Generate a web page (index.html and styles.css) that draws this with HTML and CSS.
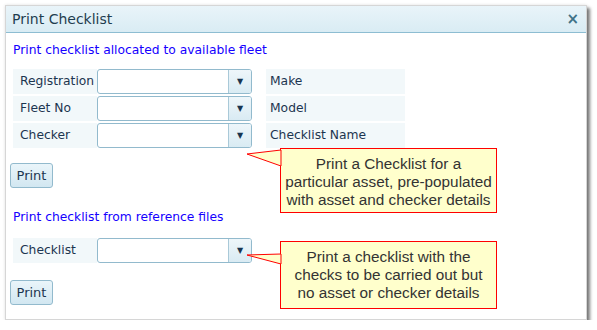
FILE: index.html
```html
<!DOCTYPE html>
<html lang="en">
<head>
    <meta charset="UTF-8">
    <title>Print Checklist</title>
    <link rel="stylesheet" href="styles.css">
</head>
<body>
    <div class="window">
        <div class="titlebar">
            <span class="title">Print Checklist</span>
            <span class="close">&times;</span>
        </div>

        <div class="content">
            <h2 class="section-title">Print checklist allocated to available fleet</h2>
            <div class="form-rows">
                <div class="row">
                    <div class="label">Registration</div>
                    <div class="combo"><span class="combo-text"></span><span class="combo-btn">&#9660;</span></div>
                    <div class="info">Make</div>
                </div>
                <div class="row">
                    <div class="label">Fleet No</div>
                    <div class="combo"><span class="combo-text"></span><span class="combo-btn">&#9660;</span></div>
                    <div class="info">Model</div>
                </div>
                <div class="row">
                    <div class="label">Checker</div>
                    <div class="combo"><span class="combo-text"></span><span class="combo-btn">&#9660;</span></div>
                    <div class="info">Checklist Name</div>
                </div>
            </div>
            <button class="btn">Print</button>

            <h2 class="section-title second">Print checklist from reference files</h2>
            <div class="form-rows">
                <div class="row">
                    <div class="label">Checklist</div>
                    <div class="combo"><span class="combo-text"></span><span class="combo-btn">&#9660;</span></div>
                </div>
            </div>
            <button class="btn">Print</button>
        </div>

        <!-- notas explicativas -->
        <div class="callout callout-one">
            <svg class="pointer" width="36" height="20" viewBox="0 0 36 20">
                <polygon points="1,5 35,1 35,17" fill="#ffffcc" stroke="#ff0000" stroke-width="1"/>
            </svg>
            Print a Checklist for a<br>particular asset, pre-populated<br>with asset and checker details
        </div>
        <div class="callout callout-two">
            <svg class="pointer" width="36" height="16" viewBox="0 0 36 16">
                <polygon points="1,3 35,2 35,12" fill="#ffffcc" stroke="#ff0000" stroke-width="1"/>
            </svg>
            Print a checklist with the<br>checks to be carried out but<br>no asset or checker details
        </div>
    </div>
</body>
</html>
```

FILE: styles.css
```css
* {
    margin: 0;
    padding: 0;
    box-sizing: border-box;
}

body {
    background: #fff;
    font-family: "DejaVu Sans", Verdana, sans-serif;
    font-size: 12.3px;
    color: #1c3550;
}

.window {
    position: relative;
    width: 582px;
    height: 315px;
    margin: 5px 0 0 5px;
    border: 1px solid #d6d6d6;
    background: #fff;
    box-shadow: 3px 3px 3px rgba(0, 0, 0, 0.5), 0 0 3px rgba(0, 0, 0, 0.12);
}

.titlebar {
    display: flex;
    justify-content: space-between;
    align-items: center;
    height: 27px;
    padding: 0 7px 0 6px;
    background: linear-gradient(#e9f4f9, #d9ecf4);
    border-bottom: 1px solid #8dbdd2;
}

.title {
    font-size: 14px;
    color: #1f3d4f;
}

.close {
    font-size: 15px;
    font-weight: bold;
    color: #3f7288;
}

.content {
    padding: 0 0 0 4px;
}

.section-title {
    font-size: 12.3px;
    font-weight: normal;
    color: #1500ff;
    line-height: 16px;
    margin: 9px 0 0 3px;
}

.section-title.second {
    margin-top: 21px;
}

.form-rows {
    display: flex;
    flex-direction: column;
    gap: 2px;
    margin: 11px 0 0 3px;
}

.second + .form-rows {
    margin-top: 13px;
}

.row {
    display: flex;
    height: 25px;
}

.label {
    width: 84px;
    padding-left: 7px;
    line-height: 25px;
    background: #f2f8fa;
    white-space: nowrap;
}

.combo {
    display: flex;
    width: 155px;
    border: 1px solid #92bacd;
    border-radius: 3px;
    background: #fff;
    overflow: hidden;
}

.combo-text {
    flex: 1;
}

.combo-btn {
    width: 23px;
    border-left: 1px solid #a9c9d8;
    background: linear-gradient(#eef6fa, #d9ebf3);
    font-size: 8px;
    line-height: 23px;
    text-align: center;
    color: #183550;
}

.info {
    width: 139px;
    margin-left: 14px;
    padding-left: 4px;
    line-height: 25px;
    background: #f2f8fa;
}

.btn {
    display: block;
    width: 43px;
    height: 25px;
    margin-top: 15px;
    border: 1px solid #92bacd;
    border-radius: 3px;
    background: linear-gradient(#eaf5fa, #d2e7f1);
    font-family: "DejaVu Sans", Verdana, sans-serif;
    font-size: 13px;
    color: #1c3550;
}

.second + .form-rows + .btn {
    margin-top: 17px;
}

.callout {
    position: absolute;
    left: 274px;
    width: 217px;
    padding-top: 6px;
    background: #ffffcc;
    border: 1px solid #ff0000;
    font-family: "Liberation Sans", Arial, sans-serif;
    font-size: 15.3px;
    line-height: 18px;
    text-align: center;
    color: #333;
    white-space: nowrap;
}

.pointer {
    position: absolute;
    left: -35px;
    overflow: visible;
}

.callout-one {
    top: 142px;
    height: 65px;
}

.callout-one .pointer {
    top: 0;
}

.callout-two {
    top: 235px;
    height: 68px;
    padding-top: 6px;
}

.callout-two .pointer {
    top: 10px;
}
```
